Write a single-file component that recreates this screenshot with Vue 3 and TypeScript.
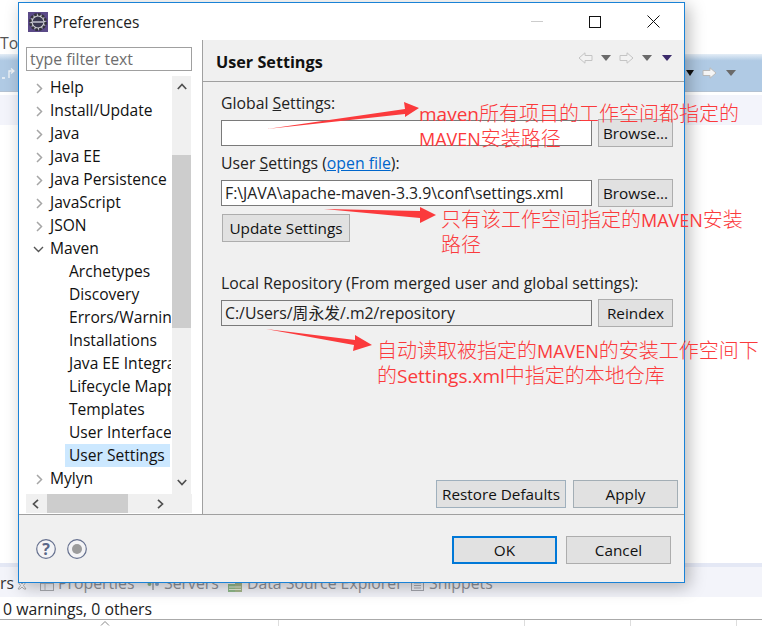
<script setup lang="ts">
interface Node { label: string; level: 0 | 1; arrow?: 'right' | 'down'; selected?: boolean }
const tree: Node[] = [
  { label: 'Help', level: 0, arrow: 'right' },
  { label: 'Install/Update', level: 0, arrow: 'right' },
  { label: 'Java', level: 0, arrow: 'right' },
  { label: 'Java EE', level: 0, arrow: 'right' },
  { label: 'Java Persistence', level: 0, arrow: 'right' },
  { label: 'JavaScript', level: 0, arrow: 'right' },
  { label: 'JSON', level: 0, arrow: 'right' },
  { label: 'Maven', level: 0, arrow: 'down' },
  { label: 'Archetypes', level: 1 },
  { label: 'Discovery', level: 1 },
  { label: 'Errors/Warnings', level: 1 },
  { label: 'Installations', level: 1 },
  { label: 'Java EE Integration', level: 1 },
  { label: 'Lifecycle Mappings', level: 1 },
  { label: 'Templates', level: 1 },
  { label: 'User Interface', level: 1 },
  { label: 'User Settings', level: 1, selected: true },
  { label: 'Mylyn', level: 0, arrow: 'right' },
]
</script>

<template>
  <div class="page">
    <div class="bg">
      <div class="bg-top"><span class="to">Tor</span></div>
      <div class="bg-toolbar">
        <svg class="bg-share" width="16" height="14" viewBox="0 0 16 14"><path d="M1 12h3M8 12V5h4M10 2.500l3 2.500-3 2.500" fill="none" stroke="#f4f6f8" stroke-width="1.300"/></svg>
        <span class="bg-spacer"></span>
        <span class="caret black"></span>
        <svg class="bg-arrow" width="15" height="12" viewBox="0 0 15 12"><path d="M1 3.500h7V.8L14 6l-6 5.200V8.500H1z" fill="#f5f5f5" stroke="#b9b9b9"/></svg>
        <span class="caret grey"></span>
      </div>
      <div class="bg-strip"></div>
      <div class="bg-mid"></div>
      <div class="bg-tabs-top"></div>
      <div class="bg-tabs">
        <span class="tab-rs">rs</span>
        <svg class="ti ti-x" width="10" height="9" viewBox="0 0 10 9"><path d="M1 1h2l2 2 2-2h2L6.500 4.500 9 8H7L5 6 3 8H1l2.500-3.500z" fill="none" stroke="#9a9a9a" stroke-width=".8"/></svg>
        <svg class="ti ti-p" width="14" height="11" viewBox="0 0 14 11"><rect x=".5" y=".5" width="13" height="10" fill="#eef0f6" stroke="#a8aab0"/><path d="M1 3.500h12M5 4v6" stroke="#b4b6bc"/></svg>
        <span class="tab prop">Properties</span>
        <svg class="ti ti-s" width="13" height="10" viewBox="0 0 13 10"><circle cx="2.500" cy="3" r="2" fill="#8db28d"/><circle cx="10" cy="3" r="2" fill="#8ca4c4"/><path d="M6 1v8" stroke="#9aa0a8" stroke-width="1.500"/></svg>
        <span class="tab srv">Servers</span>
        <svg class="ti ti-d" width="16" height="12" viewBox="0 0 16 12"><rect x="1" y="3" width="7" height="8" fill="#8fb98a"/><rect x="8" y="1" width="7" height="10" fill="#a5b78c"/><path d="M2 6h12M2 8.500h12" stroke="#e6ecd8"/></svg>
        <span class="tab dse">Data Source Explorer</span>
        <svg class="ti ti-n" width="13" height="11" viewBox="0 0 13 11"><rect x=".5" y=".5" width="12" height="10" fill="#eef0f6" stroke="#a4a6ae"/><path d="M3 3h7M3 5.500h7M3 8h7" stroke="#a8aab2"/></svg>
        <span class="tab snp">Snippets</span>
      </div>
      <div class="bg-status">0 warnings, 0 others</div>
      <div class="bg-head">
        <span class="hcell c1"><svg class="sort" width="10" height="6" viewBox="0 0 10 6"><path d="M1 5.500 5 1.500l4 4" fill="none" stroke="#888"/></svg></span>
        <span class="hcell c2"></span>
        <span class="hcell c3"></span>
        <span class="hcell c4"></span>
      </div>
    </div>

    <div class="dialog">
      <header class="titlebar">
        <svg class="app-icon" width="20" height="20" viewBox="0 0 20 20">
          <rect width="20" height="20" fill="#5b4a88"/>
          <circle cx="10" cy="10" r="7.700" fill="#cfcfd2" stroke="#34343c" stroke-width="2.600" stroke-dasharray="2.800 1.200"/>
          <circle cx="10" cy="10" r="5.400" fill="#3a3850"/>
          <rect x="4.500" y="9.200" width="11" height="1.600" fill="#b9b9c6"/>
        </svg>
        <span class="title">Preferences</span>
        <span class="grow"></span>
        <span class="win-min"></span>
        <span class="win-max"></span>
        <svg class="win-close" width="13" height="13" viewBox="0 0 13 13"><path d="M.5.500l12 12M12.500.500l-12 12" stroke="#111" stroke-width="1"/></svg>
      </header>

      <div class="body">
        <aside class="side">
          <div class="filter">type filter text</div>
          <div class="tree-wrap">
            <div class="tree-row-area">
              <ul class="tree">
                <li v-for="n in tree" :key="n.label" class="node" :class="{ child: n.level === 1, sel: n.selected }">
                  <svg v-if="n.arrow === 'right'" class="tw" width="7" height="11" viewBox="0 0 7 11"><path d="M1 1l4.500 4.500L1 10" fill="none" stroke="#a6a6a6" stroke-width="1.500"/></svg>
                  <svg v-else-if="n.arrow === 'down'" class="tw down" width="11" height="7" viewBox="0 0 11 7"><path d="M1 1l4.500 4.500L10 1" fill="none" stroke="#555" stroke-width="1.400"/></svg>
                  <span class="node-label">{{ n.label }}</span>
                </li>
              </ul>
              <div class="vscroll">
                <svg class="sb-btn" width="10" height="7" viewBox="0 0 10 7"><path d="M.8 6 5 1.500 9.200 6" fill="none" stroke="#505050" stroke-width="1.700"/></svg>
                <div class="vthumb"></div>
                <svg class="sb-btn end" width="10" height="7" viewBox="0 0 10 7"><path d="M.8 1 5 5.500 9.200 1" fill="none" stroke="#505050" stroke-width="1.700"/></svg>
              </div>
            </div>
            <div class="hscroll">
              <svg width="7" height="10" viewBox="0 0 7 10"><path d="M6 .8 1.500 5 6 9.200" fill="none" stroke="#505050" stroke-width="1.700"/></svg>
              <div class="hthumb"></div>
              <svg width="7" height="10" viewBox="0 0 7 10"><path d="M1 .8 5.500 5 1 9.200" fill="none" stroke="#505050" stroke-width="1.700"/></svg>
            </div>
          </div>
        </aside>

        <main class="panel">
          <div class="panel-head">
            <h1>User Settings</h1>
            <div class="nav">
              <svg width="15" height="12" viewBox="0 0 15 12"><path d="M14 3.500H7V.8L1 6l6 5.200V8.500h7z" fill="#f2f2f2" stroke="#c4c4c4"/></svg>
              <span class="caret grey"></span>
              <svg width="15" height="12" viewBox="0 0 15 12"><path d="M1 3.500h7V.8L14 6l-6 5.200V8.500H1z" fill="#f2f2f2" stroke="#c4c4c4"/></svg>
              <span class="caret grey"></span>
              <span class="caret purple"></span>
            </div>
          </div>
          <div class="form">
            <div class="label l1">Global <u>S</u>ettings:</div>
            <div class="row">
              <div class="input"></div>
              <button class="btn browse">Browse...</button>
            </div>
            <div class="label l2">User <u>S</u>ettings (<a class="link">open file</a>):</div>
            <div class="row">
              <div class="input">F:\JAVA\apache-maven-3.3.9\conf\settings.xml</div>
              <button class="btn browse">Browse...</button>
            </div>
            <button class="btn update">Update Settings</button>
            <div class="label l3">Local Repository (From merged user and global settings):</div>
            <div class="row">
              <div class="input ro">C:/Users/周永发/.m2/repository</div>
              <button class="btn browse">Reindex</button>
            </div>
            <div class="grow"></div>
            <div class="actions">
              <button class="btn restore">Restore Defaults</button>
              <button class="btn apply">Apply</button>
            </div>
          </div>
        </main>
      </div>

      <footer class="foot">
        <svg class="fi" width="20" height="20" viewBox="0 0 20 20"><circle cx="10" cy="10" r="9.300" fill="#f4f4f6" stroke="#66718f" stroke-width="1.200"/><text x="10" y="15.500" text-anchor="middle" class="q">?</text></svg>
        <svg class="fi rec" width="20" height="20" viewBox="0 0 20 20"><circle cx="10" cy="10" r="9.300" fill="#f4f4f6" stroke="#66718f" stroke-width="1.200"/><circle cx="10" cy="10" r="5" fill="#9c9c9c"/></svg>
        <span class="grow"></span>
        <button class="btn ok">OK</button>
        <button class="btn cancel">Cancel</button>
      </footer>
    </div>

    <svg class="arrows" width="762" height="626" viewBox="0 0 762 626">
      <polygon fill="#fb3a3c" points="267,129 405,109 404,102 419,108 405,117 405,114" />
      <polygon fill="#fb3a3c" points="324,209 420,211 420,207 436,215 420,223 420,218" />
      <polygon fill="#fb3a3c" points="266,329 355,340 355,335 372,345 353,351 354,345" />
    </svg>
    <div class="note n1">
      <div class="line"><span class="lat">maven</span>所有项目的工作空间都指定的</div>
      <div class="line"><span class="lat caps">MAVEN</span>安装路径</div>
    </div>
    <div class="note n2">
      <div class="line">只有该工作空间指定的<span class="lat caps">MAVEN</span>安装</div>
      <div class="line">路径</div>
    </div>
    <div class="note n3">
      <div class="line">自动读取被指定的<span class="lat caps">MAVEN</span>的安装工作空间下</div>
      <div class="line">的<span class="lat">Settings.xml</span>中指定的本地仓库</div>
    </div>
  </div>
</template>

<style scoped>
.page {
  position: relative;
  width: 762px;
  height: 626px;
  overflow: hidden;
  background: #fff;
  font-family: "Open Sans", "Noto Sans CJK SC", sans-serif;
  font-size: 15.8px;
  color: #111;
}
.bg { display: flex; flex-direction: column; height: 100%; }
.bg-top { height: 54px; display: flex; align-items: flex-end; }
.to { color: #555; line-height: 20px; position: relative; top: -1px; }
.bg-toolbar {
  height: 38px;
  box-sizing: border-box;
  background: linear-gradient(#e4edf6, #b0cae4 18%, #b0cae4);
  border-bottom: 1px solid #b4c2d2;
  display: flex;
  align-items: center;
  padding-right: 26px;
}
.bg-share { margin-left: 1px; }
.bg-spacer { flex: 1; }
.bg-arrow { margin: 0 9px 0 8px; }
.bg-strip { height: 33px; background: #f3f4fb; border-top: 3px solid #fff; box-sizing: border-box; }
.bg-mid { flex: 1; }
.bg-tabs-top { height: 4px; background: #e4e8f5; }
.bg-tabs {
  height: 30px;
  background: #f3f4fa;
  color: #8f9198;
  position: relative;
}
.tab-rs { color: #333; position: absolute; left: 0; top: 5px; line-height: 22px; }
.ti { position: absolute; }
.ti-x { left: 17px; top: 14px; }
.ti-p { left: 40px; top: 13px; }
.ti-s { left: 147px; top: 14px; }
.ti-d { left: 227px; top: 14px; }
.ti-n { left: 411px; top: 13px; }
.tab { position: absolute; top: 5px; line-height: 22px; white-space: nowrap; }
.prop { left: 58px; } .srv { left: 164px; } .dse { left: 247px; } .snp { left: 429px; }
.bg-status { height: 22px; line-height: 24px; padding-left: 3px; color: #222; }
.bg-head { height: 7px; box-sizing: border-box; border-top: 1px solid #aaa; display: flex; }
.hcell { border-right: 1px solid #ddd; height: 6px; position: relative; box-sizing: content-box; }
.c1 { width: 278px; } .c2 { width: 245px; } .c3 { width: 105px; } .c4 { width: 105px; }
.sort { position: absolute; left: 100px; top: 0; }

.dialog {
  position: absolute;
  left: 18px;
  top: 2px;
  width: 667px;
  height: 581px;
  box-sizing: border-box;
  border: 1px solid #1a82d6;
  background: #f0f0f0;
  box-shadow: 4px 4px 16px rgba(0, 0, 0, 0.28);
  display: flex;
  flex-direction: column;
}
.titlebar {
  height: 37px;
  flex: none;
  background: #fff;
  display: flex;
  align-items: center;
  padding-left: 9px;
}
.title { margin-left: 5px; font-size: 15.5px; color: #222; }
.grow { flex: 1; }
.win-min { width: 12px; height: 1px; background: #ccc; margin-right: 46px; }
.win-max { width: 10px; height: 10px; border: 1px solid #111; margin-right: 46px; }
.win-close { margin-right: 24px; }

.body { flex: none; height: 475px; box-sizing: border-box; display: flex; border-bottom: 1px solid #a0a0a0; }
.side { width: 183px; background: #fff; padding: 7px 10px 0 7px; box-sizing: border-box; flex: none; }
.filter {
  height: 24px;
  box-sizing: border-box;
  border: 1px solid #a0a0a0;
  color: #6d6d6d;
  line-height: 22px;
  padding-left: 3px;
  width: 166px;
}
.tree-wrap { margin-top: 5px; width: 166px; }
.tree-row-area { display: flex; height: 418px; }
.tree { list-style: none; margin: 0; padding: 0; width: 145px; height: 418px; overflow: hidden; flex: none; font-size: 15.6px; }
.node {
  height: 23px;
  line-height: 23px;
  position: relative;
  padding-left: 24px;
  white-space: nowrap;
  overflow: hidden;
}
.node.child { padding-left: 43px; }
.node.sel .node-label {
  display: block;
  background: #cce8ff;
  margin-left: -4px;
  padding-left: 4px;
  width: 101px;
  overflow: hidden;
}
.tw { position: absolute; left: 10px; top: 7px; }
.tw.down { left: 7px; top: 9px; }
.vscroll {
  width: 19px;
  background: #f0f0f0;
  display: flex;
  flex-direction: column;
  align-items: center;
  margin-left: 1px;
}
.sb-btn { margin-top: 7px; flex: none; }
.sb-btn.end { margin-top: 0; margin-bottom: 8px; }
.vthumb {
  height: 173px;
  width: 19px;
  background: #cdcdcd;
  margin-top: 65px;
  margin-bottom: 151px;
  flex: none;
}
.hscroll {
  height: 19px;
  background: #f0f0f0;
  display: flex;
  align-items: center;
  padding: 0 7px 0 6px;
}
.hthumb { width: 81px; height: 19px; background: #cdcdcd; margin: 0 29px 0 8px; flex: none; }

.panel { flex: 1; border-left: 1px solid #a0a0a0; display: flex; flex-direction: column; min-width: 0; }
.panel-head {
  height: 42px;
  flex: none;
  box-sizing: border-box;
  border-bottom: 1px solid #a0a0a0;
  display: flex;
  align-items: center;
  justify-content: space-between;
  padding: 0 12px 0 13px;
}
h1 { margin: 0; font-size: 16.2px; font-weight: 700; position: relative; top: 1px; color: #111; }
.nav { display: flex; align-items: center; gap: 8px; position: relative; top: -3px; }
.caret { display: inline-block; width: 0; height: 0; border-left: 5px solid transparent; border-right: 5px solid transparent; border-top: 6px solid #6a6a6a; }
.caret.purple { border-top-color: #3b2a6b; margin-left: 2px; }
.caret.black { border-top-color: #111; border-left-width: 4px; border-right-width: 4px; }
.form {
  flex: 1;
  display: flex;
  flex-direction: column;
  padding: 0 6px 6px 18px;
  min-height: 0;
}
.label { height: 20px; line-height: 20px; color: #222; white-space: nowrap; }
.l1 { margin-top: 11px; margin-bottom: 6px; }
.l2 { margin-top: 6px; margin-bottom: 6px; }
.l3 { margin-top: 31px; margin-bottom: 6px; }
.link { color: #0066cc; text-decoration: underline; }
.row { display: flex; align-items: center; gap: 6px; height: 28px; flex: none; }
.input {
  width: 371px;
  height: 26px;
  box-sizing: border-box;
  border: 1px solid #7a7a7a;
  background: #fff;
  line-height: 25px;
  padding-left: 3px;
  white-space: nowrap;
  overflow: hidden;
  color: #222;
  flex: none;
}
.input.ro { background: #f0f0f0; }
.btn {
  font: inherit;
  font-size: 15.3px;
  color: #111;
  background: #e1e1e1;
  border: 1px solid #adadad;
  box-sizing: border-box;
  padding: 2px 0 0;
  margin: 0;
  line-height: 1;
  white-space: nowrap;
}
.browse { width: 75px; height: 28px; flex: none; }
.update { width: 128px; height: 28px; margin: 7px 0 0 1px; flex: none; }
.actions { display: flex; justify-content: flex-end; gap: 7px; }
.restore { width: 130px; height: 28px; border-color: #9fb0bd; }
.apply { width: 105px; height: 28px; border-color: #a3aeb5; }

.foot {
  flex: 1;
  display: flex;
  align-items: center;
  padding: 2px 13px 0 17px;
}
.fi { margin-top: -2px; }
.rec { margin-left: 11px; }
.q { font-family: "Open Sans", sans-serif; font-size: 16px; font-weight: 700; fill: #5a6788; }
.ok { width: 105px; height: 28px; border: 2px solid #0078d7; }
.cancel { width: 105px; height: 28px; margin-left: 9px; }

.arrows { position: absolute; left: 0; top: 0; pointer-events: none; }
.note {
  position: absolute;
  color: #fb3a3c;
  font-family: "Noto Sans CJK SC", "Open Sans", sans-serif;
  font-size: 20px;
  white-space: nowrap;
  font-weight: 300;
}
.line { height: 25px; line-height: 25px; }
.lat { font-family: "Open Sans", sans-serif; font-size: 19px; font-weight: 400; line-height: 1; }
.lat.caps { font-size: 18px; }
.n1 { left: 419px; top: 100px; }
.n2 { left: 441px; top: 206px; }
.n3 { left: 377px; top: 337px; }
</style>
